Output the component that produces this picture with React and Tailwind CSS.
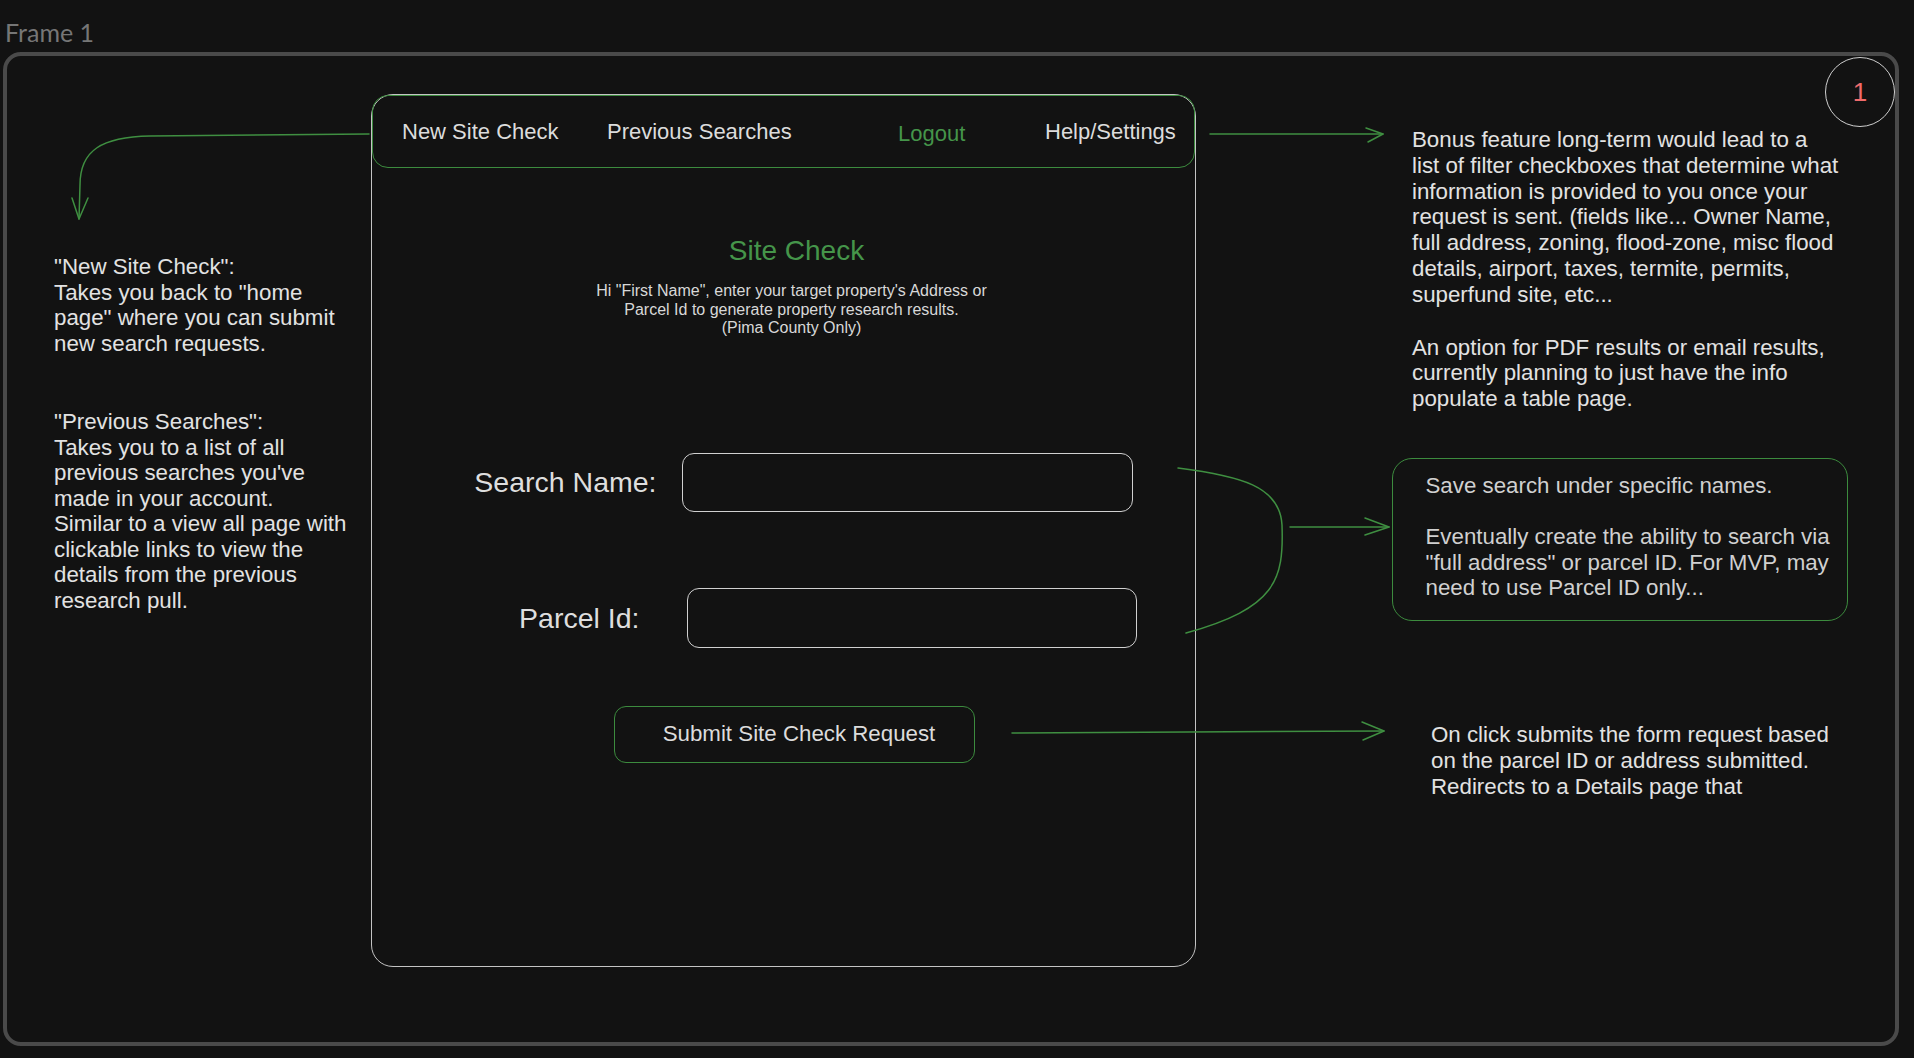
import React from "react";

const Lines = ({ lines, className = "" }) => (
  <div className={className}>
    {lines.map((l, i) => (
      <div key={i} className="whitespace-nowrap">{l}</div>
    ))}
  </div>
);

export default function App() {
  return (
    <div className="relative w-[1914px] h-[1058px] overflow-hidden bg-[#121212] font-['Liberation_Sans',Arial,sans-serif]">
      <div className="pt-[17px] pl-[5px] h-[47px] font-['Lato',sans-serif] text-[25px] leading-[30px] text-[#767676]">
        Frame 1
      </div>
      <div className="ml-[3px] mt-[5px] w-[1896px] h-[994px] border-4 border-[#4a4a4a] rounded-[18px] flex items-start">
        {/* Left annotations */}
        <div className="ml-[47px] mt-[198px] w-[317px] text-[22.3px] leading-[25.5px] text-[#e2e2e2]">
          <Lines
            lines={[
              '"New Site Check":',
              'Takes you back to "home',
              'page" where you can submit',
              'new search requests.',
            ]}
          />
          <Lines
            className="mt-[53px]"
            lines={[
              '"Previous Searches":',
              "Takes you to a list of all",
              "previous searches you've",
              "made in your account.",
              "Similar to a view all page with",
              "clickable links to view the",
              "details from the previous",
              "research pull.",
            ]}
          />
        </div>

        {/* Main wireframe */}
        <div className="mt-[38px] w-[825px] h-[873px] shrink-0 border-[1.5px] border-[#c4c4c4] rounded-[22px] flex flex-col">
          <div className="h-[73px] border-[1.5px] border-[#3c8b3e] rounded-[16px] flex items-center pl-[29px] text-[22px] leading-[26px] text-[#dcdcdc]">
            <div className="w-[205px] shrink-0 whitespace-nowrap">New Site Check</div>
            <div className="w-[291px] shrink-0 whitespace-nowrap">Previous Searches</div>
            <div className="w-[147px] shrink-0 whitespace-nowrap pt-[5px] text-[#45954a]">Logout</div>
            <div className="whitespace-nowrap">Help/Settings</div>
          </div>

          <div className="mt-[66.5px] pl-[26px] text-center text-[28px] leading-[32px] text-[#45954a]">
            Site Check
          </div>
          <div className="mt-[15.5px] pl-[16px] text-center text-[16px] leading-[18.5px] text-[#d8d8d8]">
            <div>Hi "First Name", enter your target property's Address or</div>
            <div>Parcel Id to generate property research results.</div>
            <div>(Pima County Only)</div>
          </div>

          <div className="mt-[115px] flex items-center">
            <div className="w-[284.5px] shrink-0 text-right text-[28.5px] leading-[34px] text-[#dedede] whitespace-nowrap">
              Search Name:
            </div>
            <div className="ml-[25px] w-[451px] h-[59px] border-[1.5px] border-[#d0d0d0] rounded-[12px]" />
          </div>

          <div className="mt-[76px] flex items-center">
            <div className="w-[267.5px] shrink-0 text-right text-[28.5px] leading-[34px] text-[#dedede] whitespace-nowrap">
              Parcel Id:
            </div>
            <div className="ml-[47px] w-[450px] h-[60px] border-[1.5px] border-[#d0d0d0] rounded-[12px]" />
          </div>

          <div className="mt-[58px] ml-[241.5px] w-[361px] h-[57px] border-[1.5px] border-[#3c8b3e] rounded-[12px] flex items-center justify-center pl-[10px] text-[22.3px] leading-[26px] text-[#dcdcdc] whitespace-nowrap">
            Submit Site Check Request
          </div>
        </div>

        {/* Right annotations */}
        <div className="ml-[196px] mt-[71px] w-[460px] text-[22.3px] leading-[25.8px] text-[#e2e2e2]">
          <div className="pl-[20px]">
            <Lines
              lines={[
                "Bonus feature long-term would lead to a",
                "list of filter checkboxes that determine what",
                "information is provided to you once your",
                "request is sent. (fields like... Owner Name,",
                "full address, zoning, flood-zone, misc flood",
                "details, airport, taxes, termite, permits,",
                "superfund site, etc...",
              ]}
            />
            <Lines
              className="mt-[27px]"
              lines={[
                "An option for PDF results or email results,",
                "currently planning to just have the info",
                "populate a table page.",
              ]}
            />
          </div>

          <div className="mt-[46px] w-[456px] h-[163.5px] border-[1.5px] border-[#3c8b3e] rounded-[20px] pt-[14.5px] pl-[32.5px] leading-[25.5px] text-[#d0d0d0]">
            <div className="whitespace-nowrap">Save search under specific names.</div>
            <Lines
              className="mt-[25.5px]"
              lines={[
                "Eventually create the ability to search via",
                '"full address" or parcel ID. For MVP, may',
                "need to use Parcel ID only...",
              ]}
            />
          </div>

          <Lines
            className="mt-[101px] pl-[39px] leading-[26px]"
            lines={[
              "On click submits the form request based",
              "on the parcel ID or address submitted.",
              "Redirects to a Details page that",
            ]}
          />
        </div>
      </div>

      {/* Badge */}
      <div className="absolute left-[1825px] top-[57px] w-[70px] h-[70px] rounded-full border-[1.5px] border-[#cfcfcf] flex items-center justify-center text-[26px] leading-none text-[#f06b6b]">
        1
      </div>

      {/* Connectors */}
      <svg
        className="absolute left-0 top-0 pointer-events-none"
        width="1914"
        height="1058"
        viewBox="0 0 1914 1058"
        fill="none"
        stroke="#3f8f41"
        strokeWidth="1.5"
        strokeLinecap="round"
        strokeLinejoin="round"
      >
        <path d="M 369 134 L 150 136 C 102 137, 80 150, 80 185 L 79 219" />
        <path d="M 72 198 L 79 219 L 88 198" />
        <path d="M 1210 134 L 1383 134" />
        <path d="M 1366 128 L 1383 134 L 1368 142" />
        <path d="M 1178 468 C 1240 476, 1280 486, 1282 525 C 1284 580, 1276 608, 1186 633" />
        <path d="M 1290 527 L 1389 527" />
        <path d="M 1365 518 L 1389 527 L 1365 535" />
        <path d="M 1012 733 L 1384 731" />
        <path d="M 1362 722 L 1384 731 L 1363 740" />
      </svg>
    </div>
  );
}
